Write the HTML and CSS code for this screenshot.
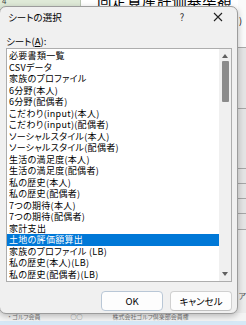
FILE: index.html
```html
<!DOCTYPE html>
<html lang="ja">
<head>
  <meta charset="UTF-8" />
  <title>シートの選択</title>
  <link rel="stylesheet" href="styles.css">
</head>
<body>

  <!-- EXCEL BEHIND -->
  <div class="sheet">
    <div class="sheet-head">
      <div class="cell-green">4</div>
      <div class="cell-title">固定資産評価基準額</div>
      <div class="cell-side">)</div>
    </div>
    <div class="sheet-row r60"></div>
    <div class="sheet-row r59"></div>
    <div class="sheet-row r14"></div>
    <div class="sheet-row r14"></div>
    <div class="sheet-row r14"></div>
    <div class="sheet-row r15"></div>
    <div class="sheet-row last"><span class="side-text">ア</span></div>
    <div class="sheet-foot">
      <span class="foot-text">・ ゴルフ会員</span>
      <span class="foot-text">○○</span>
      <span class="foot-text">株式会社ゴルフ倶楽部会員権</span>
    </div>
  </div>

  <!-- DIALOG -->
  <div class="dialog">
    <div class="titlebar">
      <span class="title">シートの選択</span>
      <span class="help">?</span>
      <span class="close">
        <svg width="10" height="10" viewBox="0 0 10 10"><path d="M1 1 L9 9 M9 1 L1 9" stroke="#222" stroke-width="1.1" fill="none"/></svg>
      </span>
    </div>

    <div class="dialog-body">
      <div class="label">シート(<u>A</u>):</div>

      <div class="listbox">
        <ul class="items">
          <li>必要書類一覧</li>
          <li>CSVデータ</li>
          <li>家族のプロファイル</li>
          <li>6分野(本人)</li>
          <li>6分野(配偶者)</li>
          <li>こだわり(input)(本人)</li>
          <li>こだわり(input)(配偶者)</li>
          <li>ソーシャルスタイル(本人)</li>
          <li>ソーシャルスタイル(配偶者)</li>
          <li>生活の満足度(本人)</li>
          <li>生活の満足度(配偶者)</li>
          <li>私の歴史(本人)</li>
          <li>私の歴史(配偶者)</li>
          <li>7つの期待(本人)</li>
          <li>7つの期待(配偶者)</li>
          <li>家計支出</li>
          <li class="selected">土地の評価額算出</li>
          <li>家族のプロファイル (LB)</li>
          <li>私の歴史(本人)(LB)</li>
          <li>私の歴史(配偶者)(LB)</li>
        </ul>
        <div class="scrollbar">
          <svg class="arrow" width="6" height="4" viewBox="0 0 6 4"><path d="M0 4 L3 0 L6 4 Z" fill="#606060"/></svg>
          <div class="track"><div class="thumb"></div></div>
          <svg class="arrow" width="6" height="4" viewBox="0 0 6 4"><path d="M0 0 L6 0 L3 4 Z" fill="#606060"/></svg>
        </div>
      </div>

      <div class="buttons">
        <button class="btn btn-default">OK</button>
        <button class="btn">キャンセル</button>
      </div>
    </div>
  </div>

</body>
</html>
```

FILE: styles.css
```css
* { margin: 0; padding: 0; box-sizing: border-box; }
html, body {
  width: 246px;
  height: 325px;
  overflow: hidden;
  background: #ffffff;
  font-family: "Noto Sans CJK JP", "Noto Sans", sans-serif;
  font-feature-settings: "palt";
  color: #000;
}
body { position: relative; }

/* EXCEL BEHIND */
.sheet {
  display: flex;
  flex-direction: column;
  width: 246px;
  height: 325px;
}

.sheet-head {
  height: 48px;
  flex-shrink: 0;
  display: flex;
  border-bottom: 1px solid #a8a8a8;
}

.cell-green {
  width: 81px;
  background: #dfead8;
  border-right: 1px solid #b8c4b2;
  font-size: 8px;
  line-height: 8px;
  color: #444;
  padding-left: 2px;
  margin-top: -3px;
}

.cell-title {
  width: 157px;
  padding-left: 16px;
  font-size: 14.5px;
  line-height: 14px;
  margin-top: -7px;
  white-space: nowrap;
  overflow: hidden;
  letter-spacing: 0.5px;
}

.cell-side {
  flex: 1;
  font-size: 9px;
  padding-top: 14px;
  padding-left: 1px;
  background: #fafafa;
}

.sheet-row {
  flex-shrink: 0;
  background: #e4e4e4;
  border-bottom: 1px solid #a6a6a6;
  font-size: 8px;
  color: #555;
  text-align: right;
}
.r60 { height: 61px; }
.r59 { height: 60px; }
.r14 { height: 15px; }
.r15 { height: 16px; }
.sheet-row.last {
  flex: 1;
  border-bottom: none;
  background: #ececec;
  padding-top: 60px;
}

.sheet-foot {
  height: 12px;
  flex-shrink: 0;
  background: #f4f4f4;
  border-bottom: 4px solid #d6e8f6;
  display: flex;
  gap: 30px;
  padding-left: 8px;
  font-size: 6px;
  line-height: 8px;
  color: #777;
  white-space: nowrap;
  overflow: hidden;
}

/* DIALOG */
.dialog {
  position: absolute;
  left: -1px;
  top: 6px;
  width: 239px;
  height: 308px;
  background: #f0f0f0;
  border: 1px solid #9c9c9c;
  border-radius: 7px;
  box-shadow: 0 2px 6px rgba(0,0,0,0.25);
  display: flex;
  flex-direction: column;
}

.titlebar {
  height: 20px;
  display: flex;
  align-items: center;
  padding-left: 8px;
  flex-shrink: 0;
}

.title {
  font-size: 9.5px;
  flex: 1;
}

.help {
  font-size: 9.5px;
  color: #333;
  width: 10px;
  text-align: center;
  margin-right: 26px;
}

.close {
  width: 10px;
  height: 10px;
  margin-right: 14px;
  display: flex;
}

.dialog-body {
  padding: 8px 5px 0 6px;
  display: flex;
  flex-direction: column;
}

.label {
  font-size: 9.5px;
  line-height: 12px;
  height: 12px;
}
.label u { text-decoration-thickness: 1px; text-underline-offset: 1px; }

.listbox {
  margin-top: 1px;
  width: 226px;
  height: 234px;
  background: #fff;
  border: 1px solid #adadad;
  display: flex;
}

.items {
  list-style: none;
  flex: 1;
  padding-top: 1px;
  overflow: hidden;
}

.items li {
  height: 11.5px;
  line-height: 11.5px;
  font-size: 9px;
  letter-spacing: 0.3px;
  padding-left: 2px;
  white-space: nowrap;
}

.items li.selected {
  background: #0078d7;
  color: #fff;
}

.scrollbar {
  width: 12px;
  background: #f0f0f0;
  display: flex;
  flex-direction: column;
  align-items: center;
  padding: 5px 0 5px;
}

.arrow { flex-shrink: 0; }

.track {
  flex: 1;
  width: 100%;
  padding: 3px 2px 0 3px;
}

.thumb {
  height: 41px;
  width: 7px;
  background: #8b8b8b;
  border-radius: 1px;
}

.buttons {
  margin-top: 9px;
  display: flex;
  justify-content: flex-end;
  gap: 7px;
  width: 226px;
}

.btn {
  width: 62px;
  height: 20px;
  background: #fdfdfd;
  border: 1px solid #d0d0d0;
  border-bottom-color: #c0c0c0;
  border-radius: 4px;
  font-family: "Noto Sans CJK JP", "Noto Sans", sans-serif;
  font-feature-settings: "palt";
  font-size: 9.5px;
  color: #000;
}

.btn-default {
  border-color: #b9c7d6;
}
```
